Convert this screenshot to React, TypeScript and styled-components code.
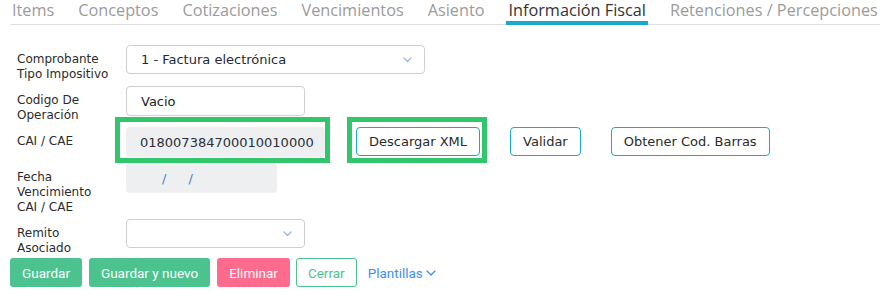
import React, {FC} from 'react';
import styled, {createGlobalStyle} from 'styled-components';

const GlobalStyle = createGlobalStyle`
  body {
    margin: 0;
    background: #ffffff;
    font-family: "DejaVu Sans", Verdana, sans-serif;
  }
`;

const tabs = [
  'Items',
  'Conceptos',
  'Cotizaciones',
  'Vencimientos',
  'Asiento',
  'Información Fiscal',
  'Retenciones / Percepciones',
];

const Chevron: FC<{color?: string; size?: number}> = ({color = '#8fb0dc', size = 9}) => (
  <svg width={size} height={size * 0.6} viewBox="0 0 10 6" fill="none">
    <path d="M1 1l4 4 4-4" stroke={color} strokeWidth="1.3" strokeLinecap="round" strokeLinejoin="round" />
  </svg>
);

const App: FC = () => {
  return (
    <>
      <GlobalStyle />
      <Page>
        <TabBar>
          {tabs.map((tab) => (
            <Tab key={tab} $active={tab === 'Información Fiscal'}>
              {tab}
            </Tab>
          ))}
        </TabBar>

        <Form>
          <Row>
            <Label>Comprobante Tipo Impositivo</Label>
            <Select $width={299}>
              1 - Factura electrónica
              <Chevron />
            </Select>
          </Row>

          <Row>
            <Label>Codigo De Operación</Label>
            <Input $width={179}>Vacio</Input>
          </Row>

          <Row $spacing={6}>
            <Label>CAI / CAE</Label>
            <Highlight $inset="-10px -5px -6px -11px">
              <ReadOnly $width={199}>018007384700010010000</ReadOnly>
            </Highlight>
            <Actions>
              <Highlight $inset="-10px -7px -7px -9px">
                <OutlineButton>Descargar XML</OutlineButton>
              </Highlight>
              <OutlineButton>Validar</OutlineButton>
              <OutlineButton>Obtener Cod. Barras</OutlineButton>
            </Actions>
          </Row>

          <Row>
            <Label>Fecha Vencimiento CAI / CAE</Label>
            <ReadOnly $width={151}>
              <DateSlash>/</DateSlash>
              <DateSlash>/</DateSlash>
            </ReadOnly>
          </Row>

          <Row $spacing={2}>
            <Label>Remito Asociado</Label>
            <Select $width={179}>
              <span />
              <Chevron />
            </Select>
          </Row>
        </Form>

        <Footer>
          <SolidButton $color="#4cc38f">Guardar</SolidButton>
          <SolidButton $color="#4cc38f">Guardar y nuevo</SolidButton>
          <SolidButton $color="#ff6b8d">Eliminar</SolidButton>
          <GhostButton>Cerrar</GhostButton>
          <MenuLink>
            Plantillas
            <Chevron color="#3f8ef5" size={10} />
          </MenuLink>
        </Footer>
      </Page>
    </>
  );
};

const Page = styled.div`
  width: 896px;
  height: 293px;
  overflow: hidden;
`;

const TabBar = styled.div`
  display: flex;
  margin: 0 16px 0 10px;
  border-bottom: 1px solid #dedede;
`;

const Tab = styled.div<{$active?: boolean}>`
  font-family: "Open Sans", sans-serif;
  font-size: 16.25px;
  line-height: 21px;
  padding: 0 2px;
  margin-right: 20px;
  margin-bottom: -1px;
  color: ${({$active}) => ($active ? '#333333' : '#9b9b9b')};
  border-bottom: 4px solid ${({$active}) => ($active ? '#1aa8cb' : 'transparent')};
  white-space: nowrap;
`;

const Form = styled.div`
  padding: 20px 0 0 17px;
`;

const Row = styled.div<{$spacing?: number}>`
  display: flex;
  align-items: flex-start;
  margin-bottom: ${({$spacing = 4}) => $spacing}px;
`;

const Label = styled.div`
  width: 109px;
  flex-shrink: 0;
  padding: 7px 14px 0 0;
  box-sizing: border-box;
  font-size: 12px;
  line-height: 15px;
  color: #2b2b2b;
`;

const fieldBase = `
  box-sizing: border-box;
  height: 30px;
  display: flex;
  align-items: center;
  padding: 0 14px;
  font-size: 13px;
  color: #1f2a38;
  border-radius: 4px;
`;

const Select = styled.div<{$width: number}>`
  ${fieldBase}
  width: ${({$width}) => $width}px;
  height: 29px;
  justify-content: space-between;
  border: 1px solid #cfcfcf;
  background: #ffffff;
  svg {
    margin-right: -2px;
  }
`;

const Input = styled.div<{$width: number}>`
  ${fieldBase}
  width: ${({$width}) => $width}px;
  border: 1px solid #cfcfcf;
  color: #222222;
`;

const ReadOnly = styled.div<{$width: number}>`
  ${fieldBase}
  width: ${({$width}) => $width}px;
  background: #eeeff1;
  color: #2a2f3a;
`;

const DateSlash = styled.span`
  color: #4f7fc2;
  margin-left: 22px;
`;

const Highlight = styled.div<{$inset: string}>`
  position: relative;
  &::after {
    content: '';
    position: absolute;
    inset: ${({$inset}) => $inset};
    border: 5px solid #31c66c;
    pointer-events: none;
  }
`;

const Actions = styled.div`
  display: flex;
  gap: 30px;
  margin-left: 31px;
`;

const OutlineButton = styled.button`
  box-sizing: border-box;
  height: 29px;
  padding: 0 12px;
  background: #ffffff;
  border: 1px solid #1ba7c9;
  border-radius: 4px;
  font-family: "DejaVu Sans", Verdana, sans-serif;
  font-size: 13px;
  color: #2a2a2a;
  cursor: pointer;
`;

const Footer = styled.div`
  display: flex;
  align-items: center;
  gap: 7px;
  padding-left: 10px;
`;

const SolidButton = styled.button<{$color: string}>`
  box-sizing: border-box;
  height: 29px;
  padding: 0 12px;
  border: none;
  border-radius: 3px;
  background: ${({$color}) => $color};
  color: #ffffff;
  font-family: Roboto, "Liberation Sans", sans-serif;
  font-size: 13.5px;
`;

const GhostButton = styled.button`
  box-sizing: border-box;
  height: 29px;
  padding: 0 11px;
  margin-left: -1px;
  border: 1px solid #4cc38f;
  border-radius: 3px;
  background: #ffffff;
  color: #4cc38f;
  font-family: Roboto, "Liberation Sans", sans-serif;
  font-size: 13.5px;
`;

const MenuLink = styled.div`
  display: flex;
  align-items: center;
  gap: 3px;
  margin-left: 4px;
  font-family: Roboto, "Liberation Sans", sans-serif;
  font-size: 13.5px;
  color: #3f8ef5;
`;

export default App;
